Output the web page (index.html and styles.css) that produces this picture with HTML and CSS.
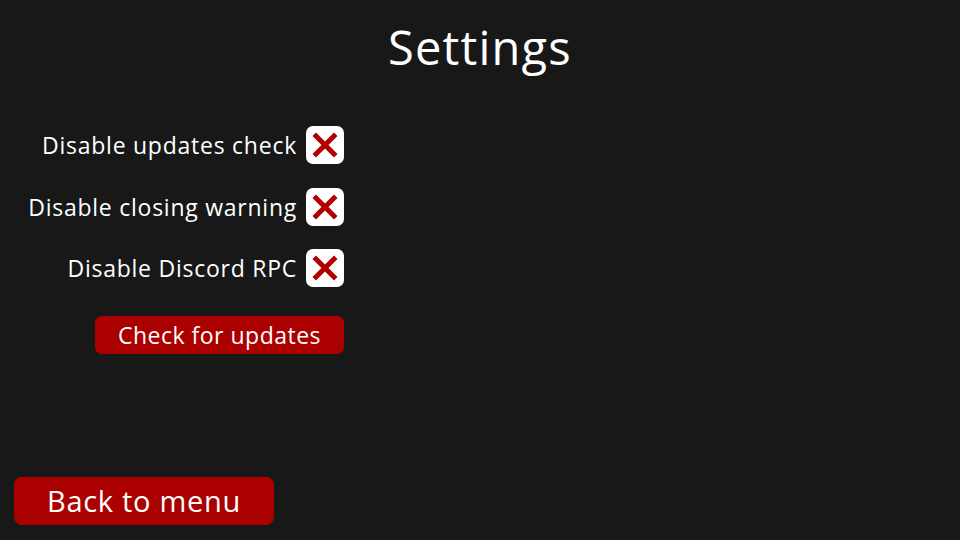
FILE: index.html
```html
<!DOCTYPE html>
<html lang="en">
<head>
  <meta charset="UTF-8" />
  <title>Settings</title>
  <link rel="stylesheet" href="styles.css">
</head>
<body>
  <div class="page">
    <h1>Settings</h1>
    <div class="options">
      <label class="option">
        <span>Disable updates check</span>
        <span class="check">
          <svg viewBox="0 0 38 38" width="38" height="38"><path d="M10 10 L28 28 M28 10 L10 28" stroke="#b00000" stroke-width="5" stroke-linecap="square"/></svg>
        </span>
      </label>
      <label class="option">
        <span>Disable closing warning</span>
        <span class="check">
          <svg viewBox="0 0 38 38" width="38" height="38"><path d="M10 10 L28 28 M28 10 L10 28" stroke="#b00000" stroke-width="5" stroke-linecap="square"/></svg>
        </span>
      </label>
      <label class="option">
        <span>Disable Discord RPC</span>
        <span class="check">
          <svg viewBox="0 0 38 38" width="38" height="38"><path d="M10 10 L28 28 M28 10 L10 28" stroke="#b00000" stroke-width="5" stroke-linecap="square"/></svg>
        </span>
      </label>
      <button class="btn update">Check for updates</button>
    </div>
    <button class="btn back">Back to menu</button>
  </div>
</body>
</html>
```

FILE: styles.css
```css
body {
  margin: 0;
  background: #181818;
  color: #fff;
  font-family: "Open Sans", sans-serif;
}
.page {
  height: 540px;
  display: flex;
  flex-direction: column;
  padding: 0 0 15px 14px;
  box-sizing: border-box;
}
h1 {
  margin: 17px 0 0 -14px;
  text-align: center;
  font-weight: 400;
  font-size: 47px;
  letter-spacing: 1.2px;
  line-height: 60px;
}
.options {
  width: 330px;
  margin-top: 49px;
  display: flex;
  flex-direction: column;
  align-items: flex-end;
}
.option {
  display: flex;
  align-items: center;
  gap: 9px;
  font-size: 23px;
  letter-spacing: 0.75px;
  line-height: 36px;
  height: 38px;
  margin-bottom: 23.5px;
}
.check {
  width: 38px;
  height: 38px;
  background: #fff;
  border-radius: 7px;
  display: flex;
}
.btn {
  border: none;
  background: #ab0000;
  color: #fff;
  font-family: inherit;
  cursor: pointer;
}
.update {
  width: 249px;
  height: 38px;
  border-radius: 7px;
  font-size: 23px;
  letter-spacing: 0.5px;
  line-height: 36px;
  padding: 0;
  margin-top: 5px;
}
.back {
  margin-top: auto;
  width: 260px;
  height: 48px;
  border-radius: 8px;
  font-size: 29px;
  letter-spacing: 0.7px;
  line-height: 44px;
  padding: 0;
}
```
